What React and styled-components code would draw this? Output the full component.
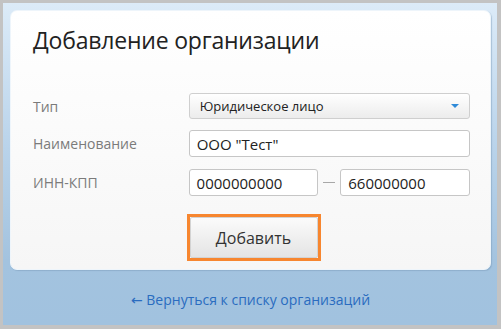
import React from 'react';
import styled, { createGlobalStyle } from 'styled-components';

const Global = createGlobalStyle`
  html, body { margin: 0; padding: 0; }
  body {
    width: 501px;
    height: 329px;
    overflow: hidden;
    font-family: "Open Sans", "DejaVu Sans", sans-serif;
  }
`;

const Frame = styled.div`
  box-sizing: border-box;
  width: 501px;
  height: 329px;
  border-style: solid;
  border-color: #c3c3c3;
  border-width: 3px 4px 4px 3px;
  background: linear-gradient(to bottom, #dcebf8 0%, #b9d3ea 45%, #a3c3df 80%, #a1c2df 100%);
  padding: 7px 6px 0 7px;
  display: flex;
  flex-direction: column;
`;

const Card = styled.div`
  box-sizing: border-box;
  height: 260px;
  background: linear-gradient(to bottom, #ffffff 0%, #f6f6f6 100%);
  border: 1px solid #eef5fb;
  border-radius: 7px;
  box-shadow: 1px 1px 1px rgba(120, 150, 180, 0.45);
  padding: 11px 20px 0 22px;
`;

const Title = styled.h1`
  margin: 0 0 35px 0;
  font-weight: 400;
  font-size: 23px;
  line-height: 36px;
  color: #222;
  letter-spacing: -0.2px;
`;

const Row = styled.div`
  display: flex;
  align-items: center;
  height: ${p => p.h || 27}px;
  margin-bottom: ${p => p.mb || 12}px;
`;

const Label = styled.div`
  width: 156px;
  font-size: 14px;
  color: #7b7b7b;
`;

const Select = styled.div`
  box-sizing: border-box;
  width: 282px;
  height: 26px;
  border: 1px solid #cfcfcf;
  border-radius: 3px;
  background: linear-gradient(to bottom, #ffffff 0%, #ececec 100%);
  display: flex;
  align-items: center;
  justify-content: space-between;
  padding: 0 10px 0 10px;
  font-size: 13px;
  color: #222;
`;

const Caret = styled.span`
  width: 0;
  height: 0;
  border-left: 4px solid transparent;
  border-right: 4px solid transparent;
  border-top: 4px solid #2f8ad8;
`;

const Input = styled.div`
  box-sizing: border-box;
  width: ${p => p.w}px;
  height: 27px;
  border: 1px solid #c6c6c6;
  border-radius: 3px;
  background: #fff;
  display: flex;
  align-items: center;
  padding: 0 7px;
  font-size: 15px;
  color: #222;
`;

const Dash = styled.span`
  width: 22px;
  display: flex;
  justify-content: center;
  &::before {
    content: '';
    width: 12px;
    height: 1px;
    background: #a8a8a8;
  }
`;

const Actions = styled.div`
  display: flex;
  justify-content: center;
  padding-top: 6px;
  padding-left: 4px;
`;

const Focus = styled.div`
  border: 3px solid #f7862f;
`;

const Button = styled.button`
  box-sizing: border-box;
  width: 128px;
  height: 41px;
  border: 1px solid #d3d3d3;
  border-radius: 2px;
  background: linear-gradient(to bottom, #fbfbfb 0%, #e4e4e4 100%);
  font-family: inherit;
  font-size: 16px;
  color: #333;
  display: block;
`;

const Footer = styled.div`
  flex: 1;
  display: flex;
  align-items: center;
  justify-content: center;
  padding-top: 3px;
`;

const BackLink = styled.a`
  font-size: 14px;
  color: #2a6cc0;
  text-decoration: none;
`;

export default function App() {
  return (
    <>
      <Global />
      <Frame>
        <Card>
          <Title>Добавление организации</Title>
          <Row h={26} mb={11}>
            <Label>Тип</Label>
            <Select>
              <span>Юридическое лицо</span>
              <Caret />
            </Select>
          </Row>
          <Row>
            <Label>Наименование</Label>
            <Input w={282}>ООО "Тест"</Input>
          </Row>
          <Row>
            <Label>ИНН-КПП</Label>
            <Input w={130}>0000000000</Input>
            <Dash />
            <Input w={130}>660000000</Input>
          </Row>
          <Actions>
            <Focus>
              <Button>Добавить</Button>
            </Focus>
          </Actions>
        </Card>
        <Footer>
          <BackLink href="#">← Вернуться к списку организаций</BackLink>
        </Footer>
      </Frame>
    </>
  );
}
